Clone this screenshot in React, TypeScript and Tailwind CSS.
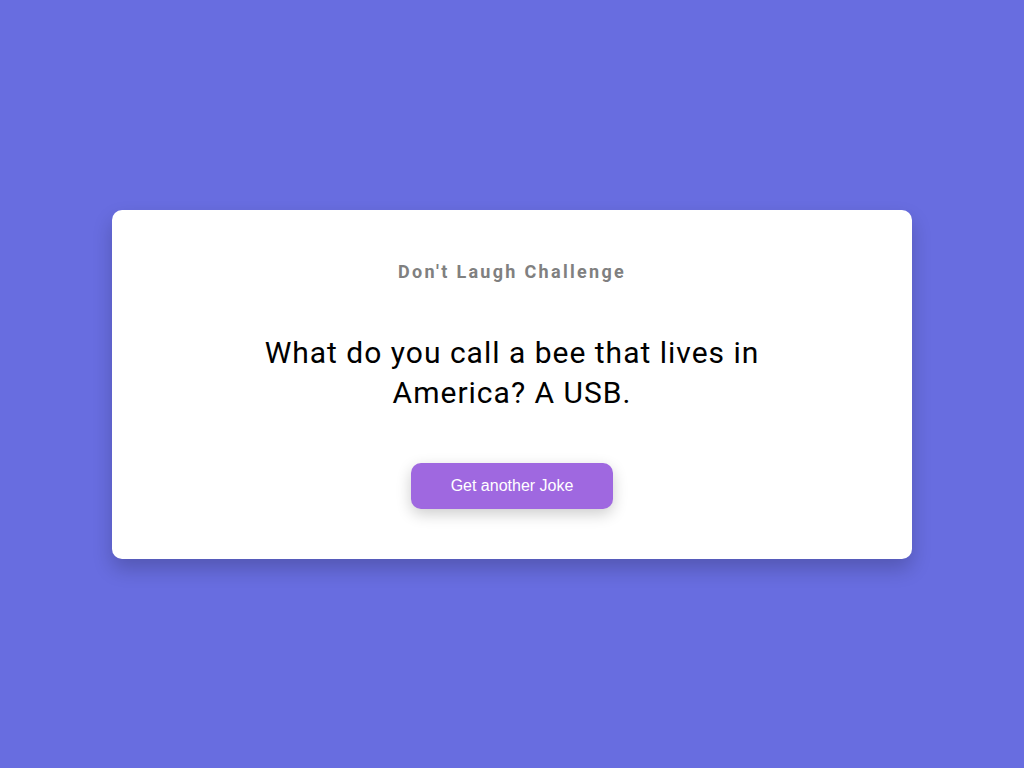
export default function App() {
    return (
        <div className="min-h-screen w-full bg-[#686de0] flex items-center justify-center">
            {/* Joke card */}
            <div className="w-[800px] bg-white rounded-[10px] shadow-[0_10px_20px_rgba(0,0,0,0.2)] p-[50px] flex flex-col items-center text-center">
                <h3 className="font-['Roboto',sans-serif] font-bold text-[18px] leading-[23px] tracking-[2.3px] text-[#808080]">
                    Don't Laugh Challenge
                </h3>
                <p className="mt-[50px] max-w-[600px] font-['Roboto',sans-serif] text-[30px] leading-[40px] tracking-[1px] text-black">
                    What do you call a bee that lives in America? A USB.
                </p>
                <button className="mt-[50px] h-[46px] px-[40px] rounded-[10px] bg-[#9f68e0] text-white font-['Liberation_Sans',Arial,sans-serif] text-[16px] shadow-[0_5px_15px_rgba(0,0,0,0.2)]">
                    Get another Joke
                </button>
            </div>
        </div>
    );
}
